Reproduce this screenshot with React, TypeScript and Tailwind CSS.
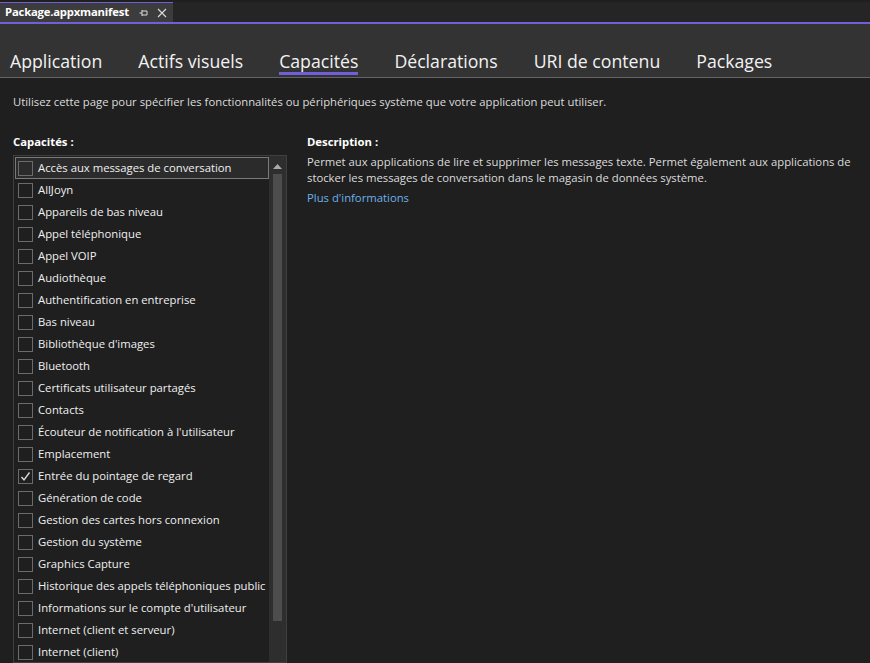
import * as React from 'react';

const TABS = ['Application', 'Actifs visuels', 'Capacités', 'Déclarations', 'URI de contenu', 'Packages'];

const CAPS = [
  'Accès aux messages de conversation',
  'AllJoyn',
  'Appareils de bas niveau',
  'Appel téléphonique',
  'Appel VOIP',
  'Audiothèque',
  'Authentification en entreprise',
  'Bas niveau',
  "Bibliothèque d'images",
  'Bluetooth',
  'Certificats utilisateur partagés',
  'Contacts',
  "Écouteur de notification à l'utilisateur",
  'Emplacement',
  'Entrée du pointage de regard',
  'Génération de code',
  'Gestion des cartes hors connexion',
  'Gestion du système',
  'Graphics Capture',
  'Historique des appels téléphoniques public',
  "Informations sur le compte d'utilisateur",
  'Internet (client et serveur)',
  'Internet (client)',
];

function CapRow({ label, checked, selected }: { label: string; checked?: boolean; selected?: boolean }) {
  return (
    <div
      className={
        'h-[22px] flex items-center pl-[2px] border shrink-0 ' +
        (selected ? 'border-[#7a7a7a] bg-[#2b2b2b]' : 'border-transparent')
      }
    >
      <div className="w-[15px] h-[15px] border border-[#6b6b6b] flex items-center justify-center shrink-0">
        {checked && (
          <svg width="11" height="11" viewBox="0 0 11 11">
            <path d="M1.5 6 L4 8.8 L9.5 1.5" fill="none" stroke="#d8d8d8" strokeWidth="1.4" />
          </svg>
        )}
      </div>
      <span className="ml-[5px] whitespace-nowrap text-[#f0f0f0]">{label}</span>
    </div>
  );
}

export default function App() {
  return (
    <div
      className="w-[870px] h-[663px] overflow-hidden bg-[#1f1f1f] text-[11.3px] flex flex-col"
      style={{ fontFamily: '"Open Sans", "Noto Sans", sans-serif' }}
    >
      {/* Document tab strip */}
      <div className="h-[20px] mt-[2px] bg-[#252526] flex shrink-0">
        <div className="w-[173px] bg-[#3c3c3c] border-t border-[#6f5fd8] flex items-center pl-[5px] text-[11.3px] font-bold text-white">
          <span className="tracking-[-0.2px]">Package.appxmanifest</span>
          <svg className="ml-[10px]" width="10" height="10" viewBox="0 0 10 10">
            <path d="M0.5 5 H3 M3 2 V8 M3 3 H8 M3 7 H8 M8 3 V7" fill="none" stroke="#dcdcdc" strokeWidth="1" />
          </svg>
          <svg className="ml-[8px]" width="10" height="10" viewBox="0 0 10 10">
            <path d="M1 1 L9 9 M9 1 L1 9" fill="none" stroke="#dcdcdc" strokeWidth="1.1" />
          </svg>
        </div>
      </div>
      <div className="h-[2px] bg-[#6f5fd8] shrink-0" />

      {/* Designer tabs */}
      <div className="h-[54px] bg-[#333333] border-b border-[#646464] flex items-end gap-9 pl-[10px] shrink-0">
        {TABS.map((t) => (
          <div
            key={t}
            className={
              'text-[17.7px] leading-[22px] mb-[2px] text-[#f2f2f2] border-b-[3px] ' +
              (t === 'Capacités' ? 'border-[#6f5fd8]' : 'border-transparent')
            }
          >
            {t}
          </div>
        ))}
      </div>

      {/* Content */}
      <div className="flex-1 flex flex-col px-[13px] pt-[16px] text-[#dcdcdc] min-h-0">
        <div className="leading-[16px]">
          Utilisez cette page pour spécifier les fonctionnalités ou périphériques système que votre application peut utiliser.
        </div>

        <div className="flex mt-[24px] flex-1 min-h-0">
          <div className="w-[274px] flex flex-col shrink-0">
            <div className="font-bold text-white leading-[16px]">Capacités :</div>
            <div className="mt-[5px] flex-1 border border-[#3f3f3f] flex min-h-0 overflow-hidden">
              <div className="flex-1 pl-[1px] pt-[1px] flex flex-col overflow-hidden">
                {CAPS.map((c, i) => (
                  <CapRow key={c} label={c} selected={i === 0} checked={c === 'Entrée du pointage de regard'} />
                ))}
              </div>
              <div className="w-[17px] bg-[#2e2e2e] flex flex-col items-center pt-[8px] shrink-0">
                <svg width="9" height="5" viewBox="0 0 9 5">
                  <path d="M0 5 L4.5 0 L9 5 Z" fill="#a8a8a8" />
                </svg>
                <div className="w-[9px] h-[447px] bg-[#4d4d4d] mt-[5px] shrink-0" />
              </div>
            </div>
          </div>

          <div className="ml-[20px] flex-1">
            <div className="font-bold text-white leading-[16px]">Description :</div>
            <div className="mt-[4px] leading-[16px] text-[#dcdcdc]">
              Permet aux applications de lire et supprimer les messages texte. Permet également aux applications de stocker les messages de conversation dans le magasin de données système.
            </div>
            <div className="mt-[4px] leading-[16px] text-[#6cb2eb]">Plus d'informations</div>
          </div>
        </div>
      </div>
    </div>
  );
}
